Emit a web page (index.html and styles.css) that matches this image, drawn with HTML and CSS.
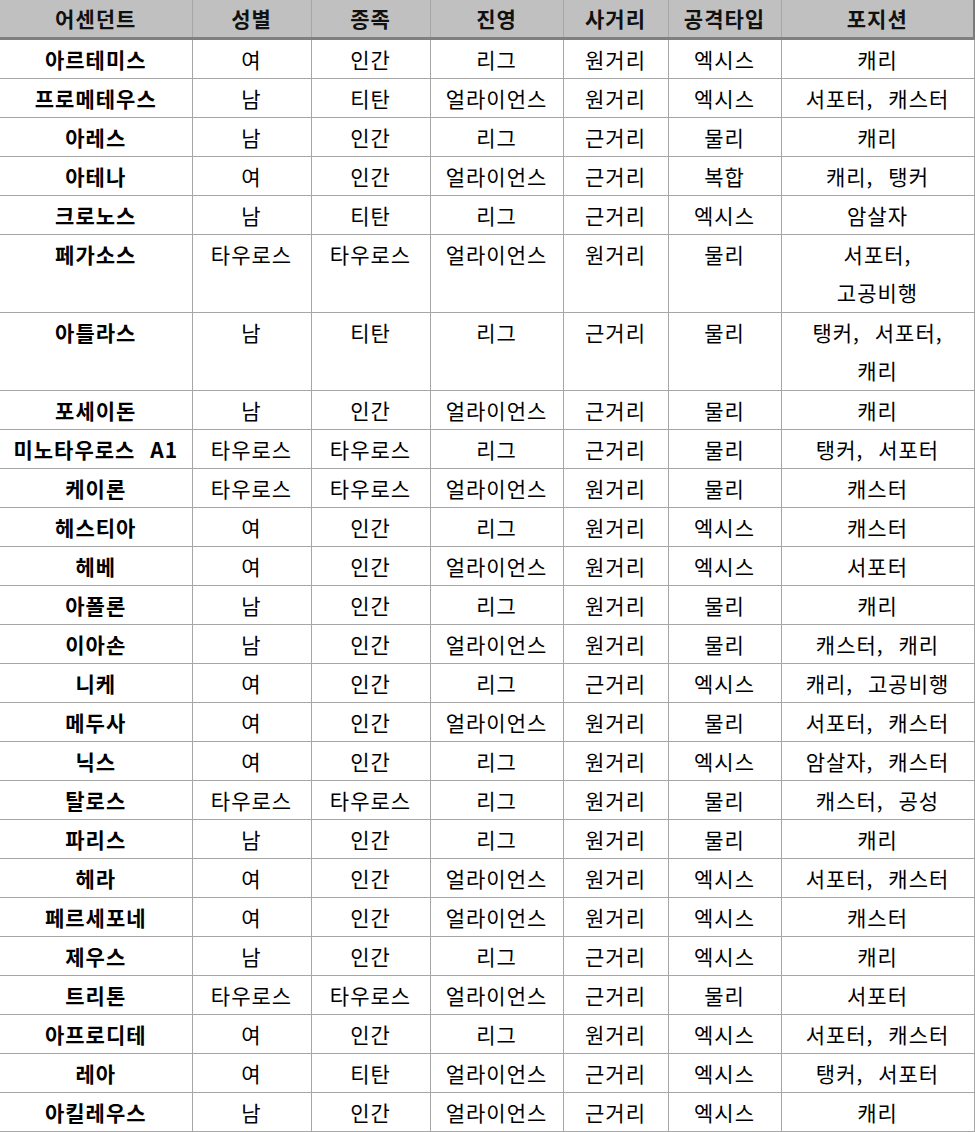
FILE: index.html
```html
<!DOCTYPE html>
<html lang="ko">
<head>
<meta charset="utf-8">
<link rel="stylesheet" href="styles.css">
</head>
<body>
<table class="grid">
  <colgroup>
    <col class="c1"><col class="c2"><col class="c3"><col class="c4"><col class="c5"><col class="c6"><col class="c7">
  </colgroup>
  <thead>
    <tr><th>어센던트</th><th>성별</th><th>종족</th><th>진영</th><th>사거리</th><th>공격타입</th><th>포지션</th></tr>
  </thead>
  <tbody>
    <tr><td class="name">아르테미스</td><td>여</td><td>인간</td><td>리그</td><td>원거리</td><td>엑시스</td><td>캐리</td></tr>
    <tr><td class="name">프로메테우스</td><td>남</td><td>티탄</td><td>얼라이언스</td><td>원거리</td><td>엑시스</td><td>서포터, 캐스터</td></tr>
    <tr><td class="name">아레스</td><td>남</td><td>인간</td><td>리그</td><td>근거리</td><td>물리</td><td>캐리</td></tr>
    <tr><td class="name">아테나</td><td>여</td><td>인간</td><td>얼라이언스</td><td>근거리</td><td>복합</td><td>캐리, 탱커</td></tr>
    <tr><td class="name">크로노스</td><td>남</td><td>티탄</td><td>리그</td><td>근거리</td><td>엑시스</td><td>암살자</td></tr>
    <tr class="tall"><td class="name">페가소스</td><td>타우로스</td><td>타우로스</td><td>얼라이언스</td><td>원거리</td><td>물리</td><td>서포터,<br>고공비행</td></tr>
    <tr class="tall"><td class="name">아틀라스</td><td>남</td><td>티탄</td><td>리그</td><td>근거리</td><td>물리</td><td>탱커, 서포터,<br>캐리</td></tr>
    <tr><td class="name">포세이돈</td><td>남</td><td>인간</td><td>얼라이언스</td><td>근거리</td><td>물리</td><td>캐리</td></tr>
    <tr><td class="name">미노타우로스 A1</td><td>타우로스</td><td>타우로스</td><td>리그</td><td>근거리</td><td>물리</td><td>탱커, 서포터</td></tr>
    <tr><td class="name">케이론</td><td>타우로스</td><td>타우로스</td><td>얼라이언스</td><td>원거리</td><td>물리</td><td>캐스터</td></tr>
    <tr><td class="name">헤스티아</td><td>여</td><td>인간</td><td>리그</td><td>원거리</td><td>엑시스</td><td>캐스터</td></tr>
    <tr><td class="name">헤베</td><td>여</td><td>인간</td><td>얼라이언스</td><td>원거리</td><td>엑시스</td><td>서포터</td></tr>
    <tr><td class="name">아폴론</td><td>남</td><td>인간</td><td>리그</td><td>원거리</td><td>물리</td><td>캐리</td></tr>
    <tr><td class="name">이아손</td><td>남</td><td>인간</td><td>얼라이언스</td><td>원거리</td><td>물리</td><td>캐스터, 캐리</td></tr>
    <tr><td class="name">니케</td><td>여</td><td>인간</td><td>리그</td><td>근거리</td><td>엑시스</td><td>캐리, 고공비행</td></tr>
    <tr><td class="name">메두사</td><td>여</td><td>인간</td><td>얼라이언스</td><td>원거리</td><td>물리</td><td>서포터, 캐스터</td></tr>
    <tr><td class="name">닉스</td><td>여</td><td>인간</td><td>리그</td><td>원거리</td><td>엑시스</td><td>암살자, 캐스터</td></tr>
    <tr><td class="name">탈로스</td><td>타우로스</td><td>타우로스</td><td>리그</td><td>원거리</td><td>물리</td><td>캐스터, 공성</td></tr>
    <tr><td class="name">파리스</td><td>남</td><td>인간</td><td>리그</td><td>원거리</td><td>물리</td><td>캐리</td></tr>
    <tr><td class="name">헤라</td><td>여</td><td>인간</td><td>얼라이언스</td><td>원거리</td><td>엑시스</td><td>서포터, 캐스터</td></tr>
    <tr><td class="name">페르세포네</td><td>여</td><td>인간</td><td>얼라이언스</td><td>원거리</td><td>엑시스</td><td>캐스터</td></tr>
    <tr><td class="name">제우스</td><td>남</td><td>인간</td><td>리그</td><td>근거리</td><td>엑시스</td><td>캐리</td></tr>
    <tr><td class="name">트리톤</td><td>타우로스</td><td>타우로스</td><td>얼라이언스</td><td>근거리</td><td>물리</td><td>서포터</td></tr>
    <tr><td class="name">아프로디테</td><td>여</td><td>인간</td><td>리그</td><td>원거리</td><td>엑시스</td><td>서포터, 캐스터</td></tr>
    <tr><td class="name">레아</td><td>여</td><td>티탄</td><td>얼라이언스</td><td>근거리</td><td>엑시스</td><td>탱커, 서포터</td></tr>
    <tr><td class="name">아킬레우스</td><td>남</td><td>인간</td><td>얼라이언스</td><td>근거리</td><td>엑시스</td><td>캐리</td></tr>
  </tbody>
</table>
</body>
</html>
```

FILE: styles.css
```css
html, body {
  margin: 0;
  padding: 0;
  background: #ffffff;
}
body {
  font-family: "Noto Sans CJK KR", "Noto Sans", sans-serif;
  color: #000000;
}
.grid {
  border-collapse: collapse;
  table-layout: fixed;
  width: 974px;
}
.c1 { width: 192px; }
.c2 { width: 119px; }
.c3 { width: 119px; }
.c4 { width: 133px; }
.c5 { width: 105px; }
.c6 { width: 113px; }
.c7 { width: 193px; }
.grid th {
  background: #c0c0c0;
  font-weight: 700;
  font-size: 21px;
  line-height: 37px;
  height: 37px;
  padding: 0;
  text-align: center;
  border-left: 1px solid #a6a6a6;
  border-right: 1px solid #a6a6a6;
  border-bottom: 3px solid #808080;
  color: #111111;
  letter-spacing: 1px;
}
.grid th:first-child { border-left: none; }
.grid th:last-child { border-right: 2px solid #7a7a7a; }
.grid td {
  font-size: 21px;
  line-height: 38px;
  height: 38px;
  padding: 0;
  text-align: center;
  vertical-align: top;
  border: 1px solid #a6a6a6;
  letter-spacing: 1px;
  word-spacing: 8px;
  white-space: nowrap;
}
.grid td:first-child { border-left: none; }
.grid td.name { font-weight: 700; }
.grid tr.tall td { height: 77px; }
```
